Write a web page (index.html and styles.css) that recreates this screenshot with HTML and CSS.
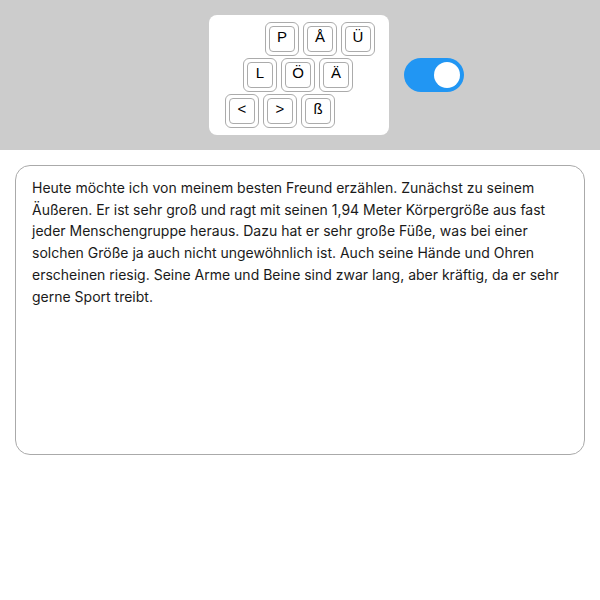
FILE: index.html
```html
<!DOCTYPE html>
<html lang="de">
<head>
<meta charset="utf-8">
<title>Tastatur</title>
<link rel="stylesheet" href="styles.css">
</head>
<body>
<header class="top">
  <div class="spacer"></div>
  <div class="keyboard">
    <div class="row row-1">
      <div class="key"><span class="cap">P</span></div>
      <div class="key"><span class="cap">Å</span></div>
      <div class="key"><span class="cap">Ü</span></div>
    </div>
    <div class="row row-2">
      <div class="key"><span class="cap">L</span></div>
      <div class="key"><span class="cap">Ö</span></div>
      <div class="key"><span class="cap">Ä</span></div>
    </div>
    <div class="row row-3">
      <div class="key"><span class="cap">&lt;</span></div>
      <div class="key"><span class="cap">&gt;</span></div>
      <div class="key"><span class="cap">ß</span></div>
    </div>
  </div>
  <div class="side">
    <label class="switch"><input type="checkbox" checked><span class="slider"></span></label>
  </div>
</header>
<main class="content">
  <textarea class="editor">Heute möchte ich von meinem besten Freund erzählen. Zunächst zu seinem Äußeren. Er ist sehr groß und ragt mit seinen 1,94 Meter Körpergröße aus fast jeder Menschengruppe heraus. Dazu hat er sehr große Füße, was bei einer solchen Größe ja auch nicht ungewöhnlich ist. Auch seine Hände und Ohren erscheinen riesig. Seine Arme und Beine sind zwar lang, aber kräftig, da er sehr gerne Sport treibt.</textarea>
</main>
</body>
</html>
```

FILE: styles.css
```css
* { box-sizing: border-box; }
html, body { margin: 0; padding: 0; background: #fff; }
body { font-family: Inter, "Liberation Sans", sans-serif; }

.top {
  background: #cccccc;
  padding: 15px 0;
  display: grid;
  grid-template-columns: 1fr 180px 1fr;
  align-items: center;
}

.keyboard {
  background: #fff;
  border-radius: 8px;
  width: 180px;
  height: 120px;
  padding: 7px 0 7px 16px;
  display: flex;
  flex-direction: column;
  gap: 2px;
  margin-left: -1px;
}

.row { display: flex; gap: 4px; }
.row-1 { margin-left: 40px; }
.row-2 { margin-left: 18px; }
.row-3 { margin-left: 0; }

.key {
  width: 34px;
  height: 34px;
  border: 1px solid #ababab;
  border-radius: 6px;
  padding: 3px;
}
.cap {
  display: block;
  width: 26px;
  height: 26px;
  border: 1px solid #ababab;
  border-radius: 4px;
  text-align: center;
  font-family: "Liberation Sans", Arial, sans-serif;
  font-size: 15px;
  line-height: 17px;
  padding-top: 1px;
  color: #000;
}

.side { padding-left: 14px; display: flex; align-items: center; }

.switch {
  position: relative;
  display: inline-block;
  width: 60px;
  height: 34px;
}
.switch input { opacity: 0; width: 0; height: 0; margin: 0; }
.slider {
  position: absolute;
  inset: 0;
  background: #2196f3;
  border-radius: 34px;
  cursor: pointer;
}
.slider::before {
  content: "";
  position: absolute;
  width: 26px;
  height: 26px;
  left: 30px;
  top: 4px;
  background: #fff;
  border-radius: 50%;
}

.content { padding: 15px; }

.editor {
  display: block;
  width: 570px;
  height: 290px;
  border: 1px solid #aaaaaa;
  border-radius: 15px;
  padding: 11px 16px;
  font-family: Inter, "Liberation Sans", sans-serif;
  font-size: 14px;
  line-height: 21.7px;
  color: #1a1a1a;
  resize: none;
  outline: none;
  background: #fff;
  overflow: hidden;
}
```
